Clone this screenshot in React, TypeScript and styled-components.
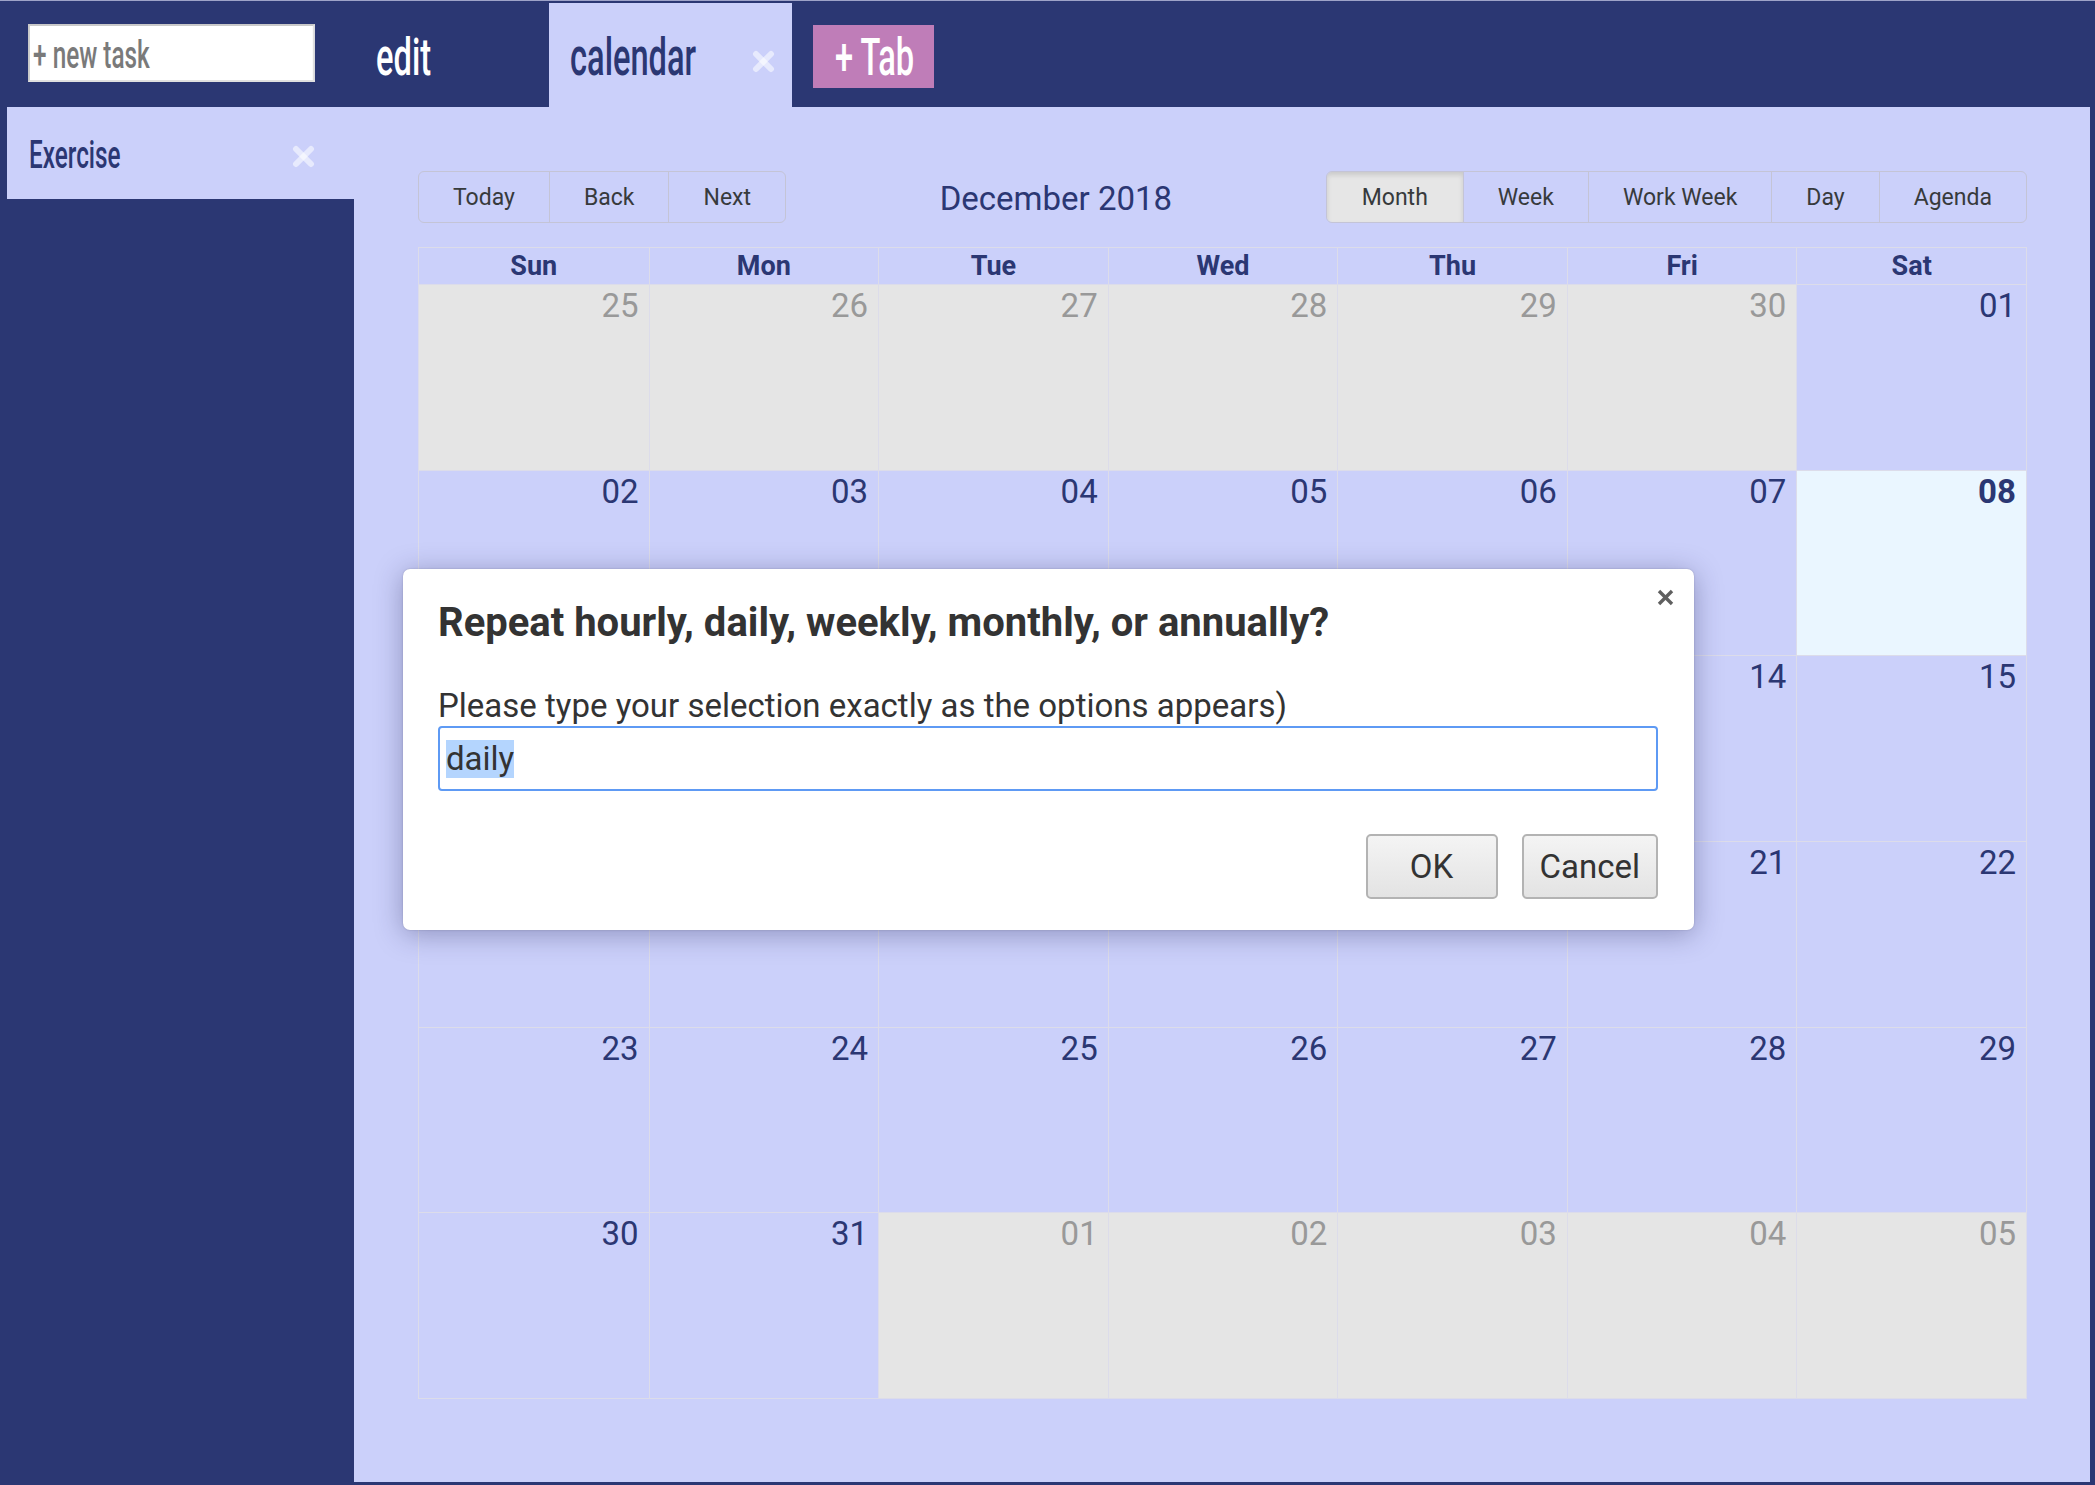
import React from "react";
import styled, { createGlobalStyle } from "styled-components";

const NAVY = "#2b3773";
const LAV = "#cbd0fa";
const SQUEEZE = 0.64;

const GlobalStyle = createGlobalStyle`
  html, body { margin: 0; padding: 0; }
  body {
    width: 2095px;
    height: 1485px;
    overflow: hidden;
    background: ${NAVY};
    font-family: Roboto, "Liberation Sans", sans-serif;
  }
  * { box-sizing: border-box; }
`;

const Root = styled.div`
  position: relative;
  width: 2095px;
  height: 1485px;
  display: flex;
  flex-direction: column;
  background: ${NAVY};
  border-top: 1px solid #9ea3c8;
`;

const TopBar = styled.div`
  height: 106px;
  flex: none;
  display: flex;
  align-items: stretch;
  padding: 2px 0 0 28px;
`;

/* condensed display text: Roboto squeezed horizontally to mimic a narrow face */
const Narrow = styled.span<{ $size: number }>`
  flex: 0 0 0;
  width: 0;
  white-space: nowrap;
  display: inline-block;
  font-family: Roboto, "Liberation Sans", sans-serif;
  font-weight: 500;
  font-size: ${(p) => p.$size}px;
  transform: scaleX(${SQUEEZE});
  transform-origin: 0 50%;
`;

const NewTask = styled.input`
  align-self: flex-start;
  margin-top: 21px;
  width: ${Math.round(287 / SQUEEZE)}px;
  margin-right: ${-Math.round(287 / SQUEEZE - 287)}px;
  transform: scaleX(${SQUEEZE});
  transform-origin: 0 50%;
  height: 58px;
  border: 3px solid #c9c9c9;
  border-right-color: #e0e0e0;
  border-bottom-width: 2px;
  border-top-width: 2px;
  border-bottom-color: #e0e0e0;
  background: #fff;
  padding: 4px 0 0 5px;
  font-family: Roboto, "Liberation Sans", sans-serif;
  font-weight: 500;
  font-size: 38px;
  color: #333;
  outline: none;
  &::placeholder { color: #7a7a7a; }
`;

const Tab = styled.div<{ $active?: boolean; $width: number; $gap: number }>`
  width: ${(p) => p.$width}px;
  margin-left: ${(p) => p.$gap}px;
  display: flex;
  align-items: center;
  padding: 5px 17px 0 21px;
  background: ${(p) => (p.$active ? LAV : "transparent")};
  color: ${(p) => (p.$active ? NAVY : "#fff")};
  cursor: pointer;
  & > svg { margin-left: auto; margin-top: 8px; }
`;

const AddTab = styled.button`
  align-self: flex-start;
  margin: 22px 0 0 21px;
  width: 121px;
  height: 63px;
  border: none;
  background: #bf7db8;
  color: #fff;
  display: flex;
  align-items: center;
  padding: 2px 0 0 22px;
  cursor: pointer;
`;

const Body = styled.div`
  flex: 1;
  display: flex;
  min-height: 0;
`;

const Sidebar = styled.aside`
  width: 354px;
  flex: none;
  padding-left: 7px;
`;

const SideItem = styled.div`
  height: 92px;
  display: flex;
  align-items: center;
  padding: 4px 39px 0 22px;
  background: ${LAV};
  color: ${NAVY};
  & > svg { margin-left: auto; margin-top: 2px; }
`;

const Main = styled.main`
  flex: 1;
  margin: 0 5px 3px 0;
  background: ${LAV};
  padding: 64px 63px 0 64px;
`;

const Toolbar = styled.div`
  display: flex;
  align-items: center;
  height: 52px;
  margin-bottom: 24px;
`;

const BtnGroup = styled.div`
  display: flex;
  height: 52px;
  border: 1px solid #c4c4d6;
  border-radius: 6px;
  overflow: hidden;
`;

const ToolBtn = styled.button<{ $active?: boolean }>`
  height: 100%;
  padding: 0 ${(p) => (p.$active ? 35 : 34)}px;
  border: none;
  border-left: 1px solid #c4c4d6;
  &:first-child { border-left: none; }
  background: ${(p) => (p.$active ? "#e6e6e6" : "transparent")};
  box-shadow: ${(p) => (p.$active ? "inset 0 3px 5px rgba(0,0,0,0.125)" : "none")};
  color: #373a3c;
  font-family: Roboto, "Liberation Sans", sans-serif;
  font-size: 23px;
  cursor: pointer;
`;

const MonthLabel = styled.span`
  flex: 1;
  text-align: center;
  color: ${NAVY};
  font-size: 33px;
  padding-top: 2px;
`;

const Grid = styled.div`
  display: grid;
  grid-template-columns: repeat(7, 1fr);
  grid-template-rows: 36px repeat(6, 1fr);
  height: 1152px;
  border: 1px solid #dcdcea;
`;

const HeadCell = styled.div`
  text-align: center;
  line-height: 36px;
  font-size: 27px;
  font-weight: 700;
  color: ${NAVY};
  border-left: 1px solid #dcdcea;
  &:first-child { border-left: none; }
`;

type Kind = "in" | "off" | "today";

const DayCell = styled.div<{ $kind: Kind; $first: boolean }>`
  border-top: 1px solid #dcdcea;
  border-left: ${(p) => (p.$first ? "none" : "1px solid #dcdcea")};
  background: ${(p) =>
    p.$kind === "off" ? "#e5e5e5" : p.$kind === "today" ? "#eaf6ff" : "transparent"};
  text-align: right;
  padding: 4px 10px 0 0;
  font-size: 33px;
  line-height: 1;
  font-weight: ${(p) => (p.$kind === "today" ? 700 : 400)};
  color: ${(p) => (p.$kind === "off" ? "#999" : NAVY)};
`;

const Dialog = styled.div`
  position: absolute;
  left: 403px;
  top: 568px;
  width: 1291px;
  height: 361px;
  background: #fff;
  border-radius: 7px;
  box-shadow: 0 4px 28px rgba(30, 30, 80, 0.35), 0 0 2px rgba(0, 0, 0, 0.2);
  padding: 31px 36px 0 35px;
  color: #333;
`;

const CloseX = styled.button`
  position: absolute;
  top: 19px;
  right: 19px;
  width: 19px;
  height: 19px;
  padding: 1px;
  border: none;
  background: none;
  cursor: pointer;
  display: flex;
`;

const DialogTitle = styled.h2`
  margin: 0;
  font-size: 40px;
  line-height: 46px;
  font-weight: 700;
  color: #333;
`;

const DialogLabel = styled.div`
  margin-top: 41px;
  font-size: 33px;
  line-height: 38px;
  color: #333;
`;

const FieldBox = styled.div`
  margin-top: 1px;
  height: 65px;
  border: 2px solid #5e9af4;
  border-radius: 4px;
  padding-left: 6px;
  display: flex;
  align-items: center;
  font-size: 33px;
  color: #333;
`;

const Selected = styled.span`
  background: #b4d5fe;
  line-height: 38px;
`;

const Actions = styled.div`
  margin-top: 43px;
  display: flex;
  justify-content: flex-end;
  gap: 24px;
`;

const DlgBtn = styled.button`
  min-width: 132px;
  height: 65px;
  padding: 0 16px;
  border: 2px solid #b3b3b3;
  border-radius: 5px;
  background: linear-gradient(#f4f4f4, #e3e3e3);
  color: #333;
  font-family: Roboto, "Liberation Sans", sans-serif;
  font-size: 33px;
  cursor: pointer;
`;

const TabClose = () => (
  <svg width="23" height="23" viewBox="0 0 23 23">
    <g stroke="rgba(255,255,255,0.55)" strokeWidth="6" strokeLinecap="round">
      <line x1="4" y1="4" x2="19" y2="19" />
      <line x1="19" y1="4" x2="4" y2="19" />
    </g>
  </svg>
);

const pad = (n: number) => (n < 10 ? `0${n}` : `${n}`);

type Day = { n: number; kind: Kind };

const buildDays = (): Day[] => {
  const days: Day[] = [];
  for (let n = 25; n <= 30; n++) days.push({ n, kind: "off" });
  for (let n = 1; n <= 31; n++) days.push({ n, kind: n === 8 ? "today" : "in" });
  for (let n = 1; n <= 5; n++) days.push({ n, kind: "off" });
  return days;
};

const weekdays = ["Sun", "Mon", "Tue", "Wed", "Thu", "Fri", "Sat"];

export default function App() {
  const days = buildDays();
  return (
    <Root>
      <GlobalStyle />
      <TopBar>
        <NewTask placeholder="+ new task" />
        <Tab $width={194} $gap={40}>
          <Narrow $size={51}>edit</Narrow>
        </Tab>
        <Tab $active $width={243} $gap={0}>
          <Narrow $size={51}>calendar</Narrow>
          <TabClose />
        </Tab>
        <AddTab>
          <Narrow $size={51}>+ Tab</Narrow>
        </AddTab>
      </TopBar>
      <Body>
        <Sidebar>
          <SideItem>
            <Narrow $size={38}>Exercise</Narrow>
            <TabClose />
          </SideItem>
        </Sidebar>
        <Main>
          <Toolbar>
            <BtnGroup>
              <ToolBtn>Today</ToolBtn>
              <ToolBtn>Back</ToolBtn>
              <ToolBtn>Next</ToolBtn>
            </BtnGroup>
            <MonthLabel>December 2018</MonthLabel>
            <BtnGroup>
              <ToolBtn $active>Month</ToolBtn>
              <ToolBtn>Week</ToolBtn>
              <ToolBtn>Work Week</ToolBtn>
              <ToolBtn>Day</ToolBtn>
              <ToolBtn>Agenda</ToolBtn>
            </BtnGroup>
          </Toolbar>
          <Grid>
            {weekdays.map((d) => (
              <HeadCell key={d}>{d}</HeadCell>
            ))}
            {days.map((d, i) => (
              <DayCell key={i} $kind={d.kind} $first={i % 7 === 0}>
                {pad(d.n)}
              </DayCell>
            ))}
          </Grid>
        </Main>
      </Body>
      <Dialog role="dialog">
        <CloseX aria-label="close">
          <svg width="17" height="17" viewBox="0 0 17 17">
            <g stroke="#5f5f5f" strokeWidth="3.4">
              <line x1="2" y1="2" x2="15" y2="15" />
              <line x1="15" y1="2" x2="2" y2="15" />
            </g>
          </svg>
        </CloseX>
        <DialogTitle>Repeat hourly, daily, weekly, monthly, or annually?</DialogTitle>
        <DialogLabel>Please type your selection exactly as the options appears)</DialogLabel>
        <FieldBox role="textbox">
          <Selected>daily</Selected>
        </FieldBox>
        <Actions>
          <DlgBtn>OK</DlgBtn>
          <DlgBtn>Cancel</DlgBtn>
        </Actions>
      </Dialog>
    </Root>
  );
}
